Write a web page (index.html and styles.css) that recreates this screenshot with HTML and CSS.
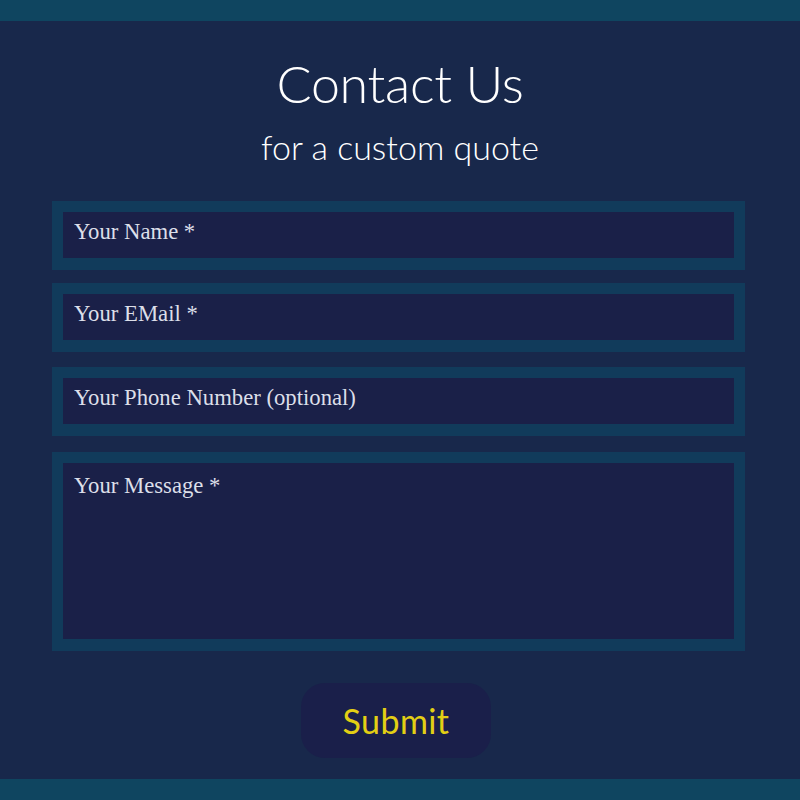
FILE: index.html
```html
<!DOCTYPE html>
<html lang="en">
<head>
<meta charset="utf-8">
<title>Contact Us</title>
<link rel="stylesheet" href="styles.css">
</head>
<body>
<div class="page">
  <div class="bar"></div>
  <main class="main">
    <h1 class="title">Contact Us</h1>
    <p class="subtitle">for a custom quote</p>
    <form class="form">
      <input class="field" type="text" placeholder="Your Name *">
      <input class="field f2" type="email" placeholder="Your EMail *">
      <input class="field f3" type="tel" placeholder="Your Phone Number (optional)">
      <textarea class="field area" placeholder="Your Message *"></textarea>
      <div class="actions">
        <button class="submit" type="button">Submit</button>
      </div>
    </form>
  </main>
  <div class="bar"></div>
</div>
</body>
</html>
```
FILE: styles.css
```css
html, body {
  margin: 0;
  padding: 0;
}
body {
  background: #18284b;
  font-family: "Lato", "Liberation Sans", sans-serif;
}
.page {
  display: flex;
  flex-direction: column;
  height: 800px;
}
.bar {
  height: 21px;
  background: #0f4560;
  flex: none;
}
.main {
  flex: 1;
  display: flex;
  flex-direction: column;
  align-items: center;
  padding-top: 30px;
}
.title {
  margin: 0;
  font-family: "Lato", sans-serif;
  font-weight: 300;
  font-size: 52px;
  line-height: 64px;
  color: #ffffff;
  letter-spacing: -0.3px;
}
.subtitle {
  margin: 12px 0 0;
  font-family: "Lato", sans-serif;
  font-weight: 300;
  font-size: 34px;
  line-height: 40px;
  color: #ffffff;
}
.form {
  align-self: flex-start;
  margin: 34px 0 0 52px;
  width: 693px;
  display: flex;
  flex-direction: column;
}
.field {
  box-sizing: border-box;
  display: block;
  width: 100%;
  height: 69px;
  margin: 0;
  border: 11px solid #113b5b;
  border-bottom-width: 12px;
  background: #1a2048;
  color: #e4e6ee;
  font-family: "Liberation Serif", serif;
  font-size: 22.7px;
  padding: 0 11px 6px;
  outline: none;
  border-radius: 0;
}
.field::placeholder {
  color: #dcdfe9;
  opacity: 1;
}
.f2 { margin-top: 13px; }
.f3 { margin-top: 15px; }
.area {
  margin-top: 16px;
  height: 199px;
  padding: 10px 11px;
  resize: none;
  line-height: normal;
}
.actions {
  display: flex;
  justify-content: center;
  margin-top: 32px;
  padding-right: 5px;
}
.submit {
  width: 190px;
  height: 75px;
  border: none;
  border-radius: 24px;
  background: #1a1f4a;
  color: #e3cf14;
  font-family: "Lato", sans-serif;
  font-weight: 400;
  font-size: 34px;
  letter-spacing: 0.4px;
  padding: 0;
  cursor: pointer;
}
```
